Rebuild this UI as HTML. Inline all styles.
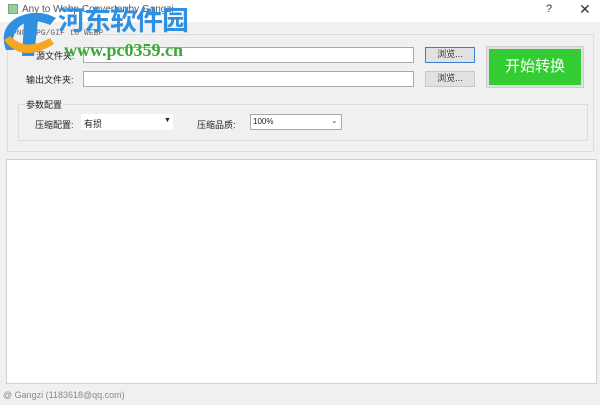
<!DOCTYPE html>
<html><head><meta charset="utf-8"><style>
*{margin:0;padding:0;box-sizing:border-box}
body{width:600px;height:405px;background:#f0f0f0;position:relative;overflow:hidden;font-family:"Liberation Sans","Noto Sans CJK SC",sans-serif;font-size:9px;color:#222}
.a{position:absolute}
.inp{position:absolute;background:#fff;border:1px solid #a8a8a8}
.btn{position:absolute;background:#e1e1e1;border:1px solid #c8c8c8;font-size:9px;text-align:center;line-height:13px;color:#333}
</style></head><body>
<div class="a" style="left:0;top:0;width:600px;height:22px;background:#fff"></div>
<div class="a" style="left:8px;top:4px;width:10px;height:10px;background:#9c9;border:1px solid #7a7"></div>
<div class="a" style="left:22px;top:4px;font-size:10px;color:#555">Any to Webp Converter by Gangzi</div>
<div class="a" style="left:546px;top:3px;font-size:11px;color:#333">?</div>
<div class="a" style="left:579px;top:1px;font-size:14px;color:#333">✕</div>

<div class="a" style="left:7px;top:34px;width:587px;height:118px;border:1px solid #dcdcdc"></div>
<div class="a" style="left:12px;top:29px;font-size:8px;color:#666;font-family:'Liberation Mono',monospace;background:#f0f0f0">PNG/JPG/GIF to WEBP</div>
<div class="a" style="left:36px;top:49px">源文件夹:</div>
<div class="inp" style="left:83px;top:47px;width:331px;height:16px"></div>
<div class="btn" style="left:425px;top:47px;width:50px;height:16px;border-color:#3c7fd1">浏览...</div>
<div class="a" style="left:26px;top:73px">输出文件夹:</div>
<div class="inp" style="left:83px;top:71px;width:331px;height:16px"></div>
<div class="btn" style="left:425px;top:71px;width:50px;height:16px">浏览...</div>
<div class="a" style="left:486px;top:46px;width:98px;height:42px;background:#e0e0e0;border:1px solid #ccc"></div>
<div class="a" style="left:489px;top:49px;width:92px;height:36px;background:#33cc33;color:#fff;font-size:15px;text-align:center;line-height:36px">开始转换</div>

<div class="a" style="left:18px;top:104px;width:570px;height:37px;border:1px solid #dcdcdc"></div>
<div class="a" style="left:25px;top:98px;background:#f0f0f0;padding:0 1px">参数配置</div>
<div class="a" style="left:35px;top:118px">压缩配置:</div>
<div class="a" style="left:81px;top:114px;width:92px;height:16px;background:#fff"></div>
<div class="a" style="left:84px;top:117px">有损</div>
<div class="a" style="left:164px;top:117px;font-size:7px">▼</div>
<div class="a" style="left:197px;top:118px">压缩品质:</div>
<div class="inp" style="left:250px;top:114px;width:92px;height:16px"></div>
<div class="a" style="left:253px;top:117px;font-size:8px">100%</div>
<div class="a" style="left:331px;top:116px;font-size:8px;color:#666">⌄</div>

<div class="a" style="left:6px;top:159px;width:591px;height:225px;background:#fff;border:1px solid #d0d0d0"></div>
<div class="a" style="left:3px;top:390px;font-size:9px;color:#888">@ Gangzi (1183618@qq.com)</div>

<svg class="a" style="left:0px;top:8px" width="58" height="52" viewBox="0 0 58 52">
<path d="M6 42 Q-2 20 18 9 Q38 0 56 10 L50 17 Q32 9 20 18 Q10 28 14 42 Z" fill="#2f8fe0"/>
<path d="M24 15 L38 12 L34 48 L22 48 Z" fill="#2f8fe0"/>
<path d="M4 32 Q22 56 54 36 L50 30 Q26 44 10 28 Z" fill="#f5a623"/>
</svg>
<div class="a" style="left:58px;top:3px;font-size:27px;font-weight:bold;color:#2f8fe0;font-family:'Noto Sans CJK SC',sans-serif;line-height:32px;letter-spacing:-1px">河东软件园</div>
<div class="a" style="left:64px;top:40px;font-size:18px;font-weight:bold;color:#3aa832;font-family:'Liberation Serif',serif">www.pc0359.cn</div>
</body></html>
